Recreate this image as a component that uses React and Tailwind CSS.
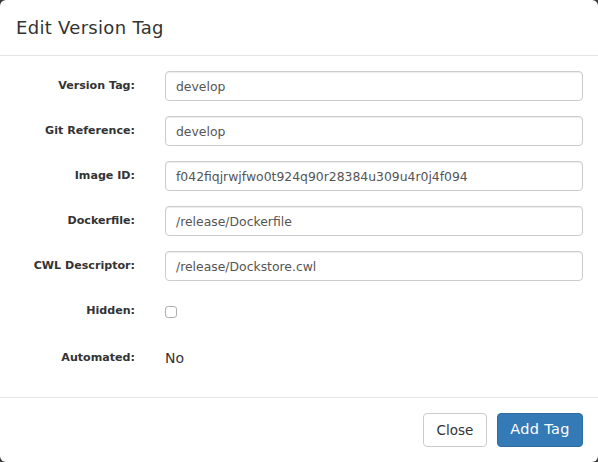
import React from 'react';

const fields = [
  { label: 'Version Tag:', value: 'develop' },
  { label: 'Git Reference:', value: 'develop' },
  { label: 'Image ID:', value: 'f042fiqjrwjfwo0t924q90r28384u309u4r0j4f094' },
  { label: 'Dockerfile:', value: '/release/Dockerfile' },
  { label: 'CWL Descriptor:', value: '/release/Dockstore.cwl' },
];

const font = { fontFamily: '"DejaVu Sans", "Open Sans", sans-serif' };

export default function App() {
  return (
    <div className="w-[598px] h-[462px] bg-[#3a3a3a]" style={font}>
      <div className="w-full h-full bg-white rounded-[6px] flex flex-col">
        {/* Header */}
        <div className="h-[56px] px-[16px] flex items-center border-b border-[#e5e5e5]">
          <h4 className="text-[18px] text-[#333] tracking-[0.3px]">Edit Version Tag</h4>
        </div>

        {/* Body */}
        <div className="flex-1 pt-[15px] flex flex-col">
          {fields.map((f) => (
            <div key={f.label} className="flex items-center mb-[15px]">
              <label className="w-[135px] text-right text-[11.1px] font-bold text-[#333]">{f.label}</label>
              <div className="pl-[30px] pr-[15px] flex-1">
                <input
                  readOnly
                  value={f.value}
                  className="w-full h-[30px] px-[10px] border border-[#ccc] rounded-[4px] text-[12.4px] text-[#555] shadow-[inset_0_1px_1px_rgba(0,0,0,0.075)] outline-none"
                  style={font}
                />
              </div>
            </div>
          ))}
          <div className="flex items-center h-[30px] mb-[17px]">
            <label className="w-[135px] text-right text-[11.1px] font-bold text-[#333]">Hidden:</label>
            <div className="pl-[30px]">
              <div className="w-[12px] h-[12px] border border-[#b0b0b0] rounded-[3px] bg-white mt-[2px]"></div>
            </div>
          </div>
          <div className="flex items-center h-[30px]">
            <label className="w-[135px] text-right text-[11.1px] font-bold text-[#333]">Automated:</label>
            <div className="pl-[30px] text-[14px] text-[#333]">No</div>
          </div>
        </div>

        {/* Footer */}
        <div className="h-[65px] border-t border-[#e5e5e5] px-[15px] flex items-center justify-end gap-[10px]">
          <button className="w-[64px] h-[34px] border border-[#ccc] rounded-[4px] bg-white text-[13.5px] text-[#333]" style={font}>Close</button>
          <button className="w-[86px] h-[34px] border border-[#2e6da4] rounded-[4px] bg-[#337ab7] text-[14.5px] text-white tracking-[0.3px]" style={font}>Add Tag</button>
        </div>
      </div>
    </div>
  );
}
